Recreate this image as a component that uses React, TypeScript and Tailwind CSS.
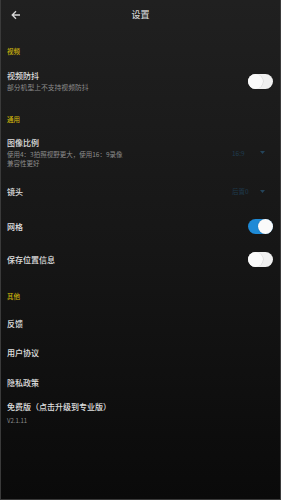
import React from 'react';

const FONT = { fontFamily: '"Noto Sans CJK SC", "Noto Sans", sans-serif' };

function Toggle({ on }: { on: boolean }) {
  return (
    <div
      className={`relative w-[25px] h-[15px] rounded-full ${on ? 'bg-[#1e8ad6]' : 'bg-[#f0f0f0]'}`}
    >
      <div
        className={`absolute top-0 w-[15px] h-[15px] rounded-full bg-[#fafafa] ${on ? 'right-0 shadow-[0_0_1px_rgba(0,0,0,0.35)]' : 'left-0 shadow-[0.5px_0_0.5px_rgba(0,0,0,0.12)]'}`}
      />
    </div>
  );
}

function Dropdown({ value }: { value: string }) {
  return (
    <div className="flex items-center w-[33px] mr-[8px] justify-between">
      <span className="text-[6.5px] leading-[8px] text-[#1f3a4d]">{value}</span>
      <svg width="5" height="3" viewBox="0 0 5 3">
        <path d="M0 0 L5 0 L2.5 3 Z" fill="#24445a" />
      </svg>
    </div>
  );
}

function Label({ text, mt }: { text: string; mt: string }) {
  return (
    <div className={`${mt} h-[16px] flex items-center text-[6.5px] font-medium text-[#cdb30d]`}>{text}</div>
  );
}

function Row({ title, mt, right }: { title: string; mt: string; right?: React.ReactNode }) {
  return (
    <div className={`${mt} h-[16px] flex items-center justify-between`}>
      <span className="text-[8px] leading-[11px] font-medium text-[#e0e0e0]">{title}</span>
      {right}
    </div>
  );
}

export default function App() {
  return (
    <div
      style={FONT}
      className="w-[281px] h-[500px] overflow-hidden bg-gradient-to-b from-[#202020] via-[#161616] to-[#0a0a0a] border-x border-b border-[#3a3a3a]"
    >
      {/* Header */}
      <div className="relative h-[30px] flex items-center justify-center">
        <svg className="absolute left-[10px] top-[10px]" width="10" height="10" viewBox="0 0 10 10">
          <path d="M9 5 H1.5 M5 1.2 L1.2 5 L5 8.8" stroke="#d6d6d6" strokeWidth="1.3" fill="none" />
        </svg>
        <span className="text-[9px] font-medium text-[#d4d4d4]">设置</span>
      </div>

      <div className="pl-[6px] pr-[7px]">
        <Label text="视频" mt="mt-[14px]" />

        <div className="mt-[10px] flex items-center justify-between">
          <div className="flex flex-col">
            <span className="text-[8px] leading-[11px] font-medium text-[#e0e0e0]">视频防抖</span>
            <span className="text-[6.8px] leading-[12px] text-[#8c8c8c]">部分机型上不支持视频防抖</span>
          </div>
          <Toggle on={false} />
        </div>

        <Label text="通用" mt="mt-[19px]" />

        <div className="mt-[9px] flex items-center justify-between">
          <div className="flex flex-col">
            <span className="text-[8px] leading-[11px] font-medium text-[#e0e0e0]">图像比例</span>
            <span className="mt-[2px] text-[6.5px] leading-[9px] text-[#8c8c8c]">
              使用4：3拍照视野更大，使用16：9录像
              <br />
              兼容性更好
            </span>
          </div>
          <Dropdown value="16:9" />
        </div>

        <Row title="镜头" mt="mt-[15px]" right={<Dropdown value="后置0" />} />
        <Row title="网格" mt="mt-[19px]" right={<Toggle on={true} />} />
        <Row title="保存位置信息" mt="mt-[17px]" right={<Toggle on={false} />} />

        <Label text="其他" mt="mt-[22px]" />

        <Row title="反馈" mt="mt-[10px]" />
        <Row title="用户协议" mt="mt-[13px]" />
        <Row title="隐私政策" mt="mt-[14px]" />

        <div className="mt-[11px] flex flex-col">
          <span className="text-[8px] leading-[11px] font-medium text-[#e0e0e0]">免费版（点击升级到专业版）</span>
          <span className="mt-[4px] text-[6px] leading-[10px] text-[#8c8c8c]">V2.1.11</span>
        </div>
      </div>
    </div>
  );
}
